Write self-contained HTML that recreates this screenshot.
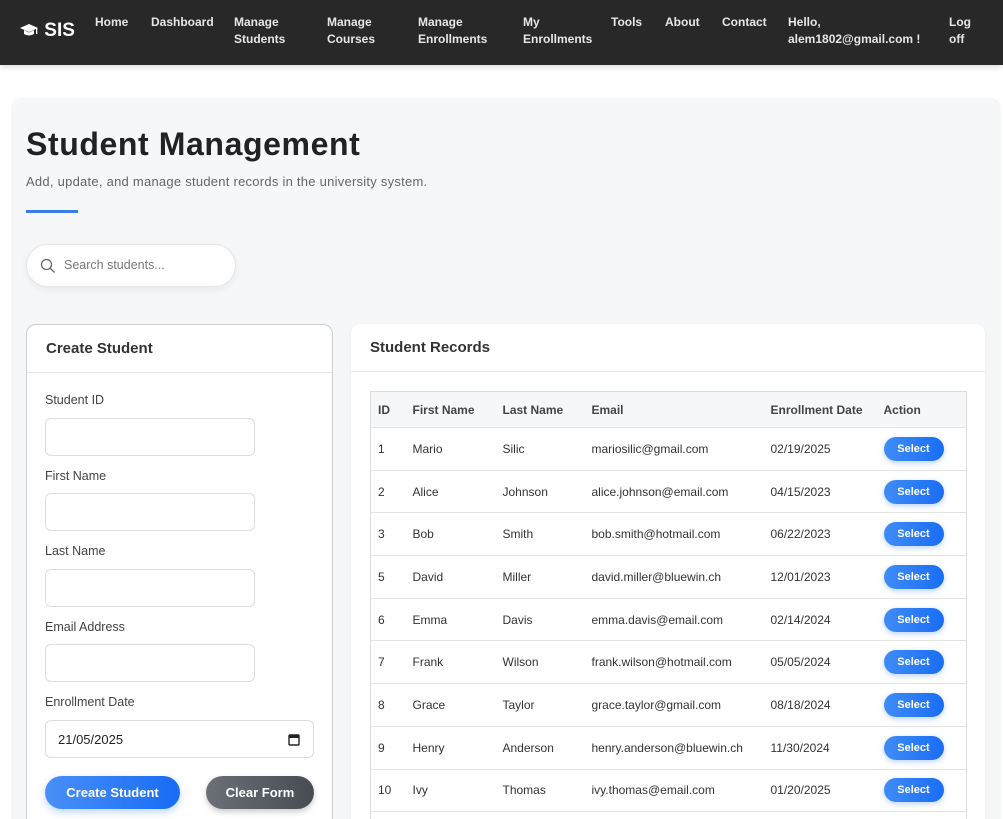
<!DOCTYPE html>
<html><head><meta charset="utf-8"><style>
*{margin:0;padding:0;box-sizing:border-box}
html,body{width:1003px;height:819px;overflow:hidden}
body{background:#fff;font-family:"Liberation Sans",sans-serif;position:relative;color:#333}
.nav{position:absolute;left:0;top:0;width:1003px;height:65px;background:#282828;box-shadow:0 2px 6px rgba(0,0,0,.15)}
.nav a{position:absolute;top:14px;color:#e6e6e6;font-size:12px;font-weight:bold;line-height:17px;text-decoration:none}
.logo{position:absolute;left:19px;top:20px;color:#fff;font-weight:bold;font-size:19px}
.main{position:absolute;left:11px;top:98px;width:990px;height:740px;background:#f6f7f9;border-radius:10px}
.abs{position:absolute}
h1{position:absolute;left:26px;top:126px;font-size:32px;font-weight:bold;color:#222;letter-spacing:0.6px}
.sub{position:absolute;left:26px;top:174px;font-size:13px;color:#666;letter-spacing:0.25px}
.bar{position:absolute;left:26px;top:210px;width:52px;height:3px;background:#3b7be8}
.search{position:absolute;left:26px;top:244px;width:210px;height:43px;background:#fff;border:1px solid #e6e6e6;border-radius:22px;box-shadow:0 3px 8px rgba(0,0,0,.06)}
.search span{position:absolute;left:37px;top:13px;font-size:12.5px;color:#777}
.card{position:absolute;background:#fff;border-radius:10px}
.lc{left:26px;top:324px;width:307px;height:520px;border:1px solid #cfcfcf}
.rc{left:351px;top:324px;width:634px;height:520px;box-shadow:0 1px 4px rgba(0,0,0,.05)}
.ch{position:absolute;left:0;top:0;right:0;height:48px;border-bottom:1px solid #e8e8e8;font-weight:bold;font-size:15px;color:#333;padding:15px 0 0 19px}
.lbl{position:absolute;left:45px;font-size:12.5px;color:#444}
.inp{position:absolute;left:45px;width:210px;height:38px;border:1px solid #ddd;border-radius:6px;background:#fff}
.btn{position:absolute;top:776px;height:33px;border-radius:17px;color:#fff;font-weight:bold;font-size:13px;text-align:center;line-height:33px}
table{position:absolute;left:370px;top:391px;width:597px;border-collapse:collapse;font-size:12px;color:#333}
th{background:#f6f7f9;text-align:left;font-weight:bold;height:36px;color:#444;font-size:12px}
td{height:42.7px;border-top:1px solid #e3e3e3}
table{border:1px solid #dcdcdc}
th,td{padding-left:7px}
.sel{display:inline-block;width:60px;height:24px;border-radius:12px;background:linear-gradient(90deg,#3f8cf7,#1a6df5);color:#fff;font-weight:bold;font-size:11px;text-align:center;line-height:24px;box-shadow:0 2px 6px rgba(40,120,245,.3)}
</style></head><body>
<div class="nav">
<div class="logo"><svg width="20" height="14" viewBox="0 0 20 14" style="vertical-align:-1px"><path d="M10 1 L19 5 L10 9 L1 5Z" fill="#fff"/><path d="M5 7 V11 Q10 14 15 11 V7 L10 9.5Z" fill="#fff"/><rect x="17" y="5" width="1.3" height="6" fill="#fff"/></svg> SIS</div>
<a style="left:95px">Home</a>
<a style="left:151px">Dashboard</a>
<a style="left:234px">Manage<br>Students</a>
<a style="left:327px">Manage<br>Courses</a>
<a style="left:418px">Manage<br>Enrollments</a>
<a style="left:523px">My<br>Enrollments</a>
<a style="left:611px">Tools</a>
<a style="left:665px">About</a>
<a style="left:722px">Contact</a>
<a style="left:788px">Hello,<br>alem1802@gmail.com !</a>
<a style="left:949px">Log<br>off</a>
</div>
<div class="main"></div>
<h1>Student Management</h1>
<div class="sub">Add, update, and manage student records in the university system.</div>
<div class="bar"></div>
<div class="search"><svg class="abs" style="left:13px;top:13px" width="16" height="16" viewBox="0 0 16 16"><circle cx="6.5" cy="6.5" r="5" fill="none" stroke="#666" stroke-width="1.3"/><path d="M10.2 10.2 L14.5 14.5" stroke="#666" stroke-width="1.3"/></svg><span>Search students...</span></div>
<div class="card lc"><div class="ch">Create Student</div></div>
<div class="card rc"><div class="ch">Student Records</div></div>
<div class="lbl" style="top:393px">Student ID</div><div class="inp" style="top:418px"></div>
<div class="lbl" style="top:469px">First Name</div><div class="inp" style="top:493px"></div>
<div class="lbl" style="top:544px">Last Name</div><div class="inp" style="top:569px"></div>
<div class="lbl" style="top:620px">Email Address</div><div class="inp" style="top:644px"></div>
<div class="lbl" style="top:695px">Enrollment Date</div>
<div class="inp" style="top:720px;width:269px;font-size:13px;padding:11px 0 0 12px;color:#222">21/05/2025<svg class="abs" style="left:242px;top:12px" width="12" height="13" viewBox="0 0 12 13"><rect x="1" y="2" width="10" height="10" rx="1" fill="none" stroke="#222" stroke-width="1.4"/><rect x="1" y="2" width="10" height="3" fill="#222"/></svg></div>
<div class="btn" style="left:45px;width:135px;background:linear-gradient(90deg,#4a8ff7,#176cf5);box-shadow:0 3px 8px rgba(40,120,245,.3)">Create Student</div>
<div class="btn" style="left:206px;width:108px;background:linear-gradient(90deg,#6b7076,#474c53);box-shadow:0 3px 6px rgba(0,0,0,.2)">Clear Form</div>
<table>
<tr><th style="width:35px">ID</th><th style="width:90px">First Name</th><th style="width:89px">Last Name</th><th style="width:179px">Email</th><th style="width:113px">Enrollment Date</th><th>Action</th></tr>
<tr><td>1</td><td>Mario</td><td>Silic</td><td>mariosilic@gmail.com</td><td>02/19/2025</td><td><span class="sel">Select</span></td></tr>
<tr><td>2</td><td>Alice</td><td>Johnson</td><td>alice.johnson@email.com</td><td>04/15/2023</td><td><span class="sel">Select</span></td></tr>
<tr><td>3</td><td>Bob</td><td>Smith</td><td>bob.smith@hotmail.com</td><td>06/22/2023</td><td><span class="sel">Select</span></td></tr>
<tr><td>5</td><td>David</td><td>Miller</td><td>david.miller@bluewin.ch</td><td>12/01/2023</td><td><span class="sel">Select</span></td></tr>
<tr><td>6</td><td>Emma</td><td>Davis</td><td>emma.davis@email.com</td><td>02/14/2024</td><td><span class="sel">Select</span></td></tr>
<tr><td>7</td><td>Frank</td><td>Wilson</td><td>frank.wilson@hotmail.com</td><td>05/05/2024</td><td><span class="sel">Select</span></td></tr>
<tr><td>8</td><td>Grace</td><td>Taylor</td><td>grace.taylor@gmail.com</td><td>08/18/2024</td><td><span class="sel">Select</span></td></tr>
<tr><td>9</td><td>Henry</td><td>Anderson</td><td>henry.anderson@bluewin.ch</td><td>11/30/2024</td><td><span class="sel">Select</span></td></tr>
<tr><td>10</td><td>Ivy</td><td>Thomas</td><td>ivy.thomas@email.com</td><td>01/20/2025</td><td><span class="sel">Select</span></td></tr>
<tr><td>&nbsp;</td><td></td><td></td><td></td><td></td><td></td></tr>
</table>
</body></html>
